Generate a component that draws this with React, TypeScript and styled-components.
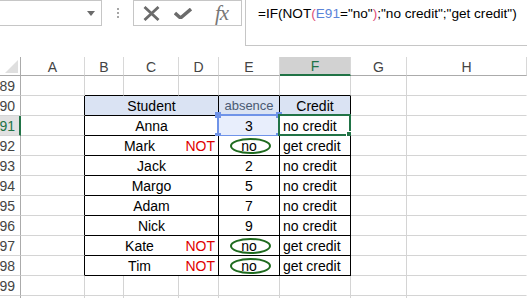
import React from "react";
import styled, { createGlobalStyle } from "styled-components";

const Global = createGlobalStyle`
  html, body { margin: 0; padding: 0; background: #fff; }
  body { font-family: "Liberation Sans", Arial, sans-serif; overflow: hidden; }
`;

type Line = "grid" | "black" | "none" | "head";
const lineColor = (l?: Line) =>
  l === "black" ? "#000" : l === "none" ? "transparent" : l === "head" ? "#ababab" : "#d4d4d4";

const Page = styled.div`
  width: 527px;
  height: 298px;
  overflow: hidden;
  display: flex;
  flex-direction: column;
`;

const TopBar = styled.div`
  display: flex;
  height: 46px;
  align-items: flex-start;
`;

const NameBox = styled.div`
  box-sizing: border-box;
  width: 102px;
  height: 26px;
  border-top: 1px solid #c6c6c6;
  border-right: 1px solid #c6c6c6;
  border-bottom: 1px solid #c6c6c6;
  display: flex;
  justify-content: flex-end;
  align-items: center;
  padding-right: 6px;
`;

const Dots = styled.div`
  width: 31px;
  height: 26px;
  display: flex;
  flex-direction: column;
  align-items: center;
  justify-content: center;
  gap: 2px;
  span {
    width: 2px;
    height: 2px;
    background: #a6a6a6;
  }
`;

const FxBox = styled.div`
  box-sizing: border-box;
  width: 109px;
  height: 26px;
  border: 1px solid #c6c6c6;
  display: flex;
  align-items: center;
  padding-left: 8px;
  margin-right: 3px;
`;

const IconSlot = styled.div<{ $w: number }>`
  width: ${(p) => p.$w}px;
  display: flex;
  justify-content: center;
  align-items: center;
`;

const FxText = styled.span`
  font-family: "Liberation Serif", "Times New Roman", serif;
  font-style: italic;
  font-size: 21px;
  color: #777;
  letter-spacing: -1px;
  line-height: 1;
  margin-left: 3px;
`;

const FormulaBox = styled.div`
  box-sizing: border-box;
  flex: 1;
  height: 46px;
  border-left: 1px solid #c6c6c6;
  border-bottom: 1px solid #c6c6c6;
  padding: 5px 0 0 12px;
  font-size: 13.6px;
  line-height: 18px;
  color: #000;
  white-space: nowrap;
`;

const Tok = styled.span<{ $c: string }>`
  color: ${(p) => p.$c};
`;

const Sheet = styled.div`
  margin-top: 11px;
  display: grid;
  grid-template-columns: 21px 64px 39px 55px 40px 61px 71px 56px 1fr;
  grid-template-rows: 19px;
  grid-auto-rows: 20px;
`;

const Cell = styled.div<{
  $r?: Line;
  $b?: Line;
  $bg?: string;
  $span?: number;
  $justify?: string;
}>`
  box-sizing: border-box;
  position: relative;
  grid-column: span ${(p) => p.$span ?? 1};
  border-right: 1px solid ${(p) => lineColor(p.$r)};
  border-bottom: 1px solid ${(p) => lineColor(p.$b)};
  background: ${(p) => p.$bg ?? "#fff"};
  display: flex;
  align-items: center;
  justify-content: ${(p) => p.$justify ?? "center"};
  font-size: 14px;
  color: #000;
  white-space: nowrap;
  padding-top: 1px;
`;

const ColHead = styled.div<{ $active?: boolean }>`
  box-sizing: border-box;
  position: relative;
  border-right: 1px solid #d8d8d8;
  border-bottom: ${(p) => (p.$active ? "2px solid #217346" : "1px solid #ababab")};
  background: ${(p) => (p.$active ? "#d2d2d2" : "#fff")};
  color: ${(p) => (p.$active ? "#217346" : "#444")};
  font-size: 14px;
  display: flex;
  align-items: center;
  justify-content: center;
  padding-top: 1px;
`;

const Corner = styled.div`
  box-sizing: border-box;
  border-right: 1px solid #ababab;
  border-bottom: 1px solid #ababab;
  display: flex;
  align-items: flex-end;
  justify-content: flex-end;
  padding: 0 2px 2px 0;
`;

const RowHead = styled.div<{ $active?: boolean }>`
  box-sizing: border-box;
  border-right: ${(p) => (p.$active ? "2px solid #217346" : "1px solid #ababab")};
  border-bottom: 1px solid #d4d4d4;
  background: ${(p) => (p.$active ? "#e1e1e1" : "#fff")};
  color: ${(p) => (p.$active ? "#217346" : "#444")};
  font-size: 14px;
  display: flex;
  align-items: center;
  justify-content: flex-end;
  padding: 1px ${(p) => (p.$active ? 4 : 5)}px 0 0;
  margin-left: -1px;
  width: 22px;
`;

const NameText = styled.span<{ $shift: number }>`
  flex: 1;
  text-align: center;
  padding-left: ${(p) => p.$shift}px;
`;

const NotText = styled.span`
  width: 40px;
  text-align: right;
  padding-right: 3px;
  box-sizing: border-box;
  color: #e00000;
`;

const AbsenceHead = styled.span`
  font-size: 13px;
  color: #4a5a72;
  align-self: flex-start;
  margin-top: 1px;
`;

const CreditText = styled.span`
  padding-left: 3px;
`;

const Oval = styled.span`
  position: absolute;
  left: 11px;
  top: 2px;
  width: 41px;
  height: 16px;
  box-sizing: border-box;
  border: 2px solid #1f6b1f;
  border-radius: 50%;
`;

const RefBox = styled.span`
  position: absolute;
  left: -2px;
  top: -2px;
  right: -1px;
  bottom: -2px;
  border: 2px solid #6f93e8;
  pointer-events: none;
`;

const Handle = styled.span<{ $x: "l" | "r"; $y: "t" | "b" }>`
  position: absolute;
  width: 6px;
  height: 6px;
  background: #6f93e8;
  ${(p) => (p.$x === "l" ? "left: -4px;" : "right: -4px;")}
  ${(p) => (p.$y === "t" ? "top: -4px;" : "bottom: -4px;")}
`;

const ActiveBox = styled.span`
  position: absolute;
  left: -2px;
  top: -2px;
  right: -1px;
  bottom: -1px;
  border: 2px solid #217346;
  pointer-events: none;
`;

const FillHandle = styled.span`
  position: absolute;
  right: -4px;
  bottom: -4px;
  width: 5px;
  height: 5px;
  background: #217346;
  border: 1px solid #fff;
`;

type Row = {
  n: number;
  label?: string;
  kind: "empty" | "top" | "head" | "data";
  name?: string;
  not?: boolean;
  abs?: string;
  credit?: string;
};

const rows: Row[] = [
  { n: 89, kind: "top" },
  { n: 90, kind: "head" },
  { n: 91, kind: "data", name: "Anna", abs: "3", credit: "no credit" },
  { n: 92, kind: "data", name: "Mark", not: true, abs: "no", credit: "get credit" },
  { n: 93, kind: "data", name: "Jack", abs: "2", credit: "no credit" },
  { n: 94, kind: "data", name: "Margo", abs: "5", credit: "no credit" },
  { n: 95, kind: "data", name: "Adam", abs: "7", credit: "no credit" },
  { n: 96, kind: "data", name: "Nick", abs: "9", credit: "no credit" },
  { n: 97, kind: "data", name: "Kate", not: true, abs: "no", credit: "get credit" },
  { n: 98, kind: "data", name: "Tim", not: true, abs: "no", credit: "get credit" },
  { n: 99, kind: "empty" },
  { n: 100, label: "", kind: "empty" },
];

const HEAD_BG = "#dae3f3";

function SheetRow({ r }: { r: Row }) {
  const inTable = r.kind === "head" || r.kind === "data";
  const active = r.n === 91;
  return (
    <>
      <RowHead $active={active}>{r.label ?? r.n}</RowHead>
      <Cell $r={inTable ? "black" : "grid"} $b="grid" />
      {r.kind === "empty" && (
        <>
          <Cell />
          <Cell />
          <Cell />
          <Cell />
          <Cell />
        </>
      )}
      {r.kind === "top" && (
        <>
          <Cell $b="black" />
          <Cell $b="black" />
          <Cell $b="black" />
          <Cell $b="black" />
          <Cell $b="black" />
        </>
      )}
      {r.kind === "head" && (
        <>
          <Cell $span={3} $r="black" $b="black" $bg={HEAD_BG}>
            Student
          </Cell>
          <Cell $r="black" $b="black" $bg={HEAD_BG}>
            <AbsenceHead>absence</AbsenceHead>
          </Cell>
          <Cell $r="black" $b="black" $bg={HEAD_BG}>
            Credit
          </Cell>
        </>
      )}
      {r.kind === "data" && (
        <>
          <Cell $span={3} $r="black" $b="black" $justify="stretch">
            <NameText $shift={r.not ? 16 : 0}>{r.name}</NameText>
            {r.not && <NotText>NOT</NotText>}
          </Cell>
          <Cell $r="black" $b="black" $bg={active ? "#e8eefc" : undefined}>
            {r.abs}
            {r.abs === "no" && <Oval />}
            {active && (
              <RefBox>
                <Handle $x="l" $y="t" />
                <Handle $x="r" $y="t" />
                <Handle $x="l" $y="b" />
                <Handle $x="r" $y="b" />
              </RefBox>
            )}
          </Cell>
          <Cell $r="black" $b="black" $justify="flex-start">
            <CreditText>{r.credit}</CreditText>
            {active && (
              <ActiveBox>
                <FillHandle />
              </ActiveBox>
            )}
          </Cell>
        </>
      )}
      <Cell />
      <Cell $r="none" />
    </>
  );
}

export default function App() {
  const cols = ["A", "B", "C", "D", "E", "F", "G", "H"];
  return (
    <Page>
      <Global />
      <TopBar>
        <NameBox>
          <svg width="8" height="5" viewBox="0 0 8 5">
            <path d="M0 0 L8 0 L4 5 Z" fill="#6b6b6b" />
          </svg>
        </NameBox>
        <Dots>
          <span />
          <span />
          <span />
        </Dots>
        <FxBox>
          <IconSlot $w={18}>
            <svg width="17" height="15" viewBox="0 0 17 15">
              <path d="M1.5 1 L15.5 14 M15.5 1 L1.5 14" stroke="#6b6b6b" strokeWidth="2.8" />
            </svg>
          </IconSlot>
          <IconSlot $w={46}>
            <svg width="18" height="11" viewBox="0 0 18 11">
              <path d="M1 5 L6.5 10 L17 1" stroke="#6b6b6b" strokeWidth="3.4" fill="none" strokeLinejoin="miter" />
            </svg>
          </IconSlot>
          <IconSlot $w={28}>
            <FxText>fx</FxText>
          </IconSlot>
        </FxBox>
        <FormulaBox>
          =IF(NOT<Tok $c="#e0507a">(</Tok>
          <Tok $c="#5b84d8">E91</Tok>="no"<Tok $c="#e0507a">)</Tok>;"no credit";"get credit")
        </FormulaBox>
      </TopBar>
      <Sheet>
        <Corner>
          <svg width="13" height="13" viewBox="0 0 13 13">
            <path d="M13 0 L13 13 L0 13 Z" fill="#dfdfdf" />
          </svg>
        </Corner>
        {cols.map((c) => (
          <ColHead key={c} $active={c === "F"}>
            {c}
          </ColHead>
        ))}
        {rows.map((r) => (
          <SheetRow key={r.n} r={r} />
        ))}
      </Sheet>
    </Page>
  );
}
